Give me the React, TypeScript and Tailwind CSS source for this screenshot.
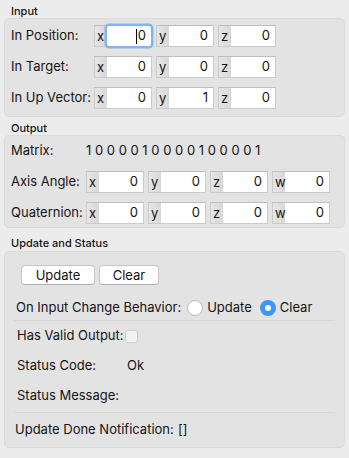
import React from 'react';

const FONT = { fontFamily: 'Inter, "Liberation Sans", Arial, sans-serif' };

type FieldProps = { label: string; value: string; focused?: boolean };

const Field: React.FC<FieldProps> = ({ label, value, focused }) => (
  <div className="flex h-[22px] w-[58px] border border-[#cbcbcb] border-t-[#bdbdbd] bg-white">
    <div className="flex w-[12px] items-center bg-gradient-to-r from-[#e6e6e6] to-[#d8d8d8] pl-[2px] leading-none">
      {label}
    </div>
    {focused ? (
      <div className="relative z-10 flex flex-1 items-center justify-end rounded-[2px] bg-white pr-[5px] shadow-[0_0_0_2.5px_#86b3f2]">
        <span className="mr-[1px] h-[15px] w-[1px] bg-black" />
        {value}
      </div>
    ) : (
      <div className="flex flex-1 items-center justify-end pr-[5px]">{value}</div>
    )}
  </div>
);

const SectionTitle: React.FC<{ children: React.ReactNode; tall?: boolean }> = ({ children, tall }) => (
  <div className={`${tall ? 'h-[23px] pt-[8px]' : 'h-[18px] pt-[4px]'} pl-[7px] text-[11px] font-medium leading-[14px]`}>
    {children}
  </div>
);

const Separator = () => <div className="mx-[9px] h-[1px] bg-[#d6d6d6]" />;

const Radio: React.FC<{ checked?: boolean }> = ({ checked }) =>
  checked ? (
    <div className="flex h-[16px] w-[16px] items-center justify-center rounded-full bg-[#3a97fb]">
      <div className="h-[6px] w-[6px] rounded-full bg-white" />
    </div>
  ) : (
    <div className="h-[16px] w-[16px] rounded-full border border-[#bdbdbd] bg-white" />
  );

export default function App() {
  const inputRows = [
    { name: 'In Position:', vals: ['0', '0', '0'], focus: true },
    { name: 'In Target:', vals: ['0', '0', '0'] },
    { name: 'In Up Vector:', vals: ['0', '1', '0'] },
  ];

  return (
    <div className="h-[458px] w-[349px] bg-[#ececec] px-[4px] text-[13px] text-[#141414]" style={FONT}>
      {/* Input */}
      <SectionTitle>Input</SectionTitle>
      <div className="flex flex-col gap-[9px] rounded-[5px] border border-[#dadada] bg-[#e3e3e3] pb-[7px] pt-[6px]">
        {inputRows.map(row => (
          <div key={row.name} className="flex h-[22px] items-center pl-[6px]">
            <div className="w-[83px]">{row.name}</div>
            <div className="flex gap-[4px]">
              {['x', 'y', 'z'].map((l, i) => (
                <Field key={l} label={l} value={row.vals[i]} focused={row.focus && i === 0} />
              ))}
            </div>
          </div>
        ))}
      </div>

      {/* Output */}
      <SectionTitle>Output</SectionTitle>
      <div className="flex flex-col gap-[9px] rounded-[5px] border border-[#dadada] bg-[#e3e3e3] pb-[3px] pt-[4px]">
        <div className="flex h-[22px] items-center pl-[6px]">
          <div className="w-[75px]">Matrix:</div>
          <div>1 0 0 0 0 1 0 0 0 0 1 0 0 0 0 1</div>
        </div>
        {['Axis Angle:', 'Quaternion:'].map(name => (
          <div key={name} className="flex h-[22px] items-center pl-[6px]">
            <div className="w-[75px]">{name}</div>
            <div className="flex gap-[4px]">
              {['x', 'y', 'z', 'w'].map(l => (
                <Field key={l} label={l} value="0" />
              ))}
            </div>
          </div>
        ))}
      </div>

      {/* Update and Status */}
      <SectionTitle tall>Update and Status</SectionTitle>
      <div className="flex flex-col rounded-[5px] border border-[#dadada] bg-[#e3e3e3] pt-[13px]">
        <div className="flex gap-[4px] pl-[16px]">
          <button className="h-[20px] w-[74px] rounded-[4px] border border-[#c6c6c6] border-b-[#b0b0b0] bg-white leading-none">
            Update
          </button>
          <button className="h-[20px] w-[60px] rounded-[4px] border border-[#c6c6c6] border-b-[#b0b0b0] bg-white leading-none">
            Clear
          </button>
        </div>
        <div className="mt-[13px] flex h-[20px] items-center pl-[11px]">
          <span>On Input Change Behavior:</span>
          <div className="ml-[6px] flex items-center gap-[4px]">
            <Radio />
            <span>Update</span>
          </div>
          <div className="ml-[8px] flex items-center gap-[4px]">
            <Radio checked />
            <span>Clear</span>
          </div>
        </div>
        <div className="mt-[2px]">
          <Separator />
        </div>
        <div className="flex h-[30px] items-center pl-[12px]">
          <span className="w-[108px]">Has Valid Output:</span>
          <div className="h-[13px] w-[13px] rounded-[3px] border border-[#cdcdcd] bg-[#f2f2f2]" />
        </div>
        <div className="flex h-[30px] items-center pl-[12px]">
          <span className="w-[110px]">Status Code:</span>
          <span>Ok</span>
        </div>
        <div className="flex h-[30px] items-center pl-[12px]">
          <span>Status Message:</span>
        </div>
        <div className="mt-[1px]">
          <Separator />
        </div>
        <div className="flex h-[34px] items-center pl-[10px]">
          <span className="w-[163px]">Update Done Notification:</span>
          <span>[]</span>
        </div>
      </div>
    </div>
  );
}
